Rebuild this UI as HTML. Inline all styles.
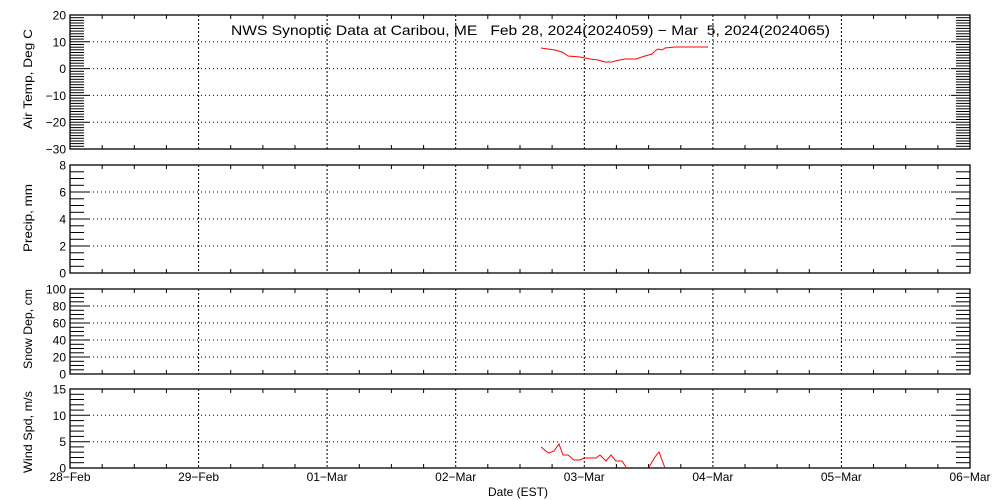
<!DOCTYPE html><html><head><style>body{margin:0;background:#fff}svg{display:block}text{font-family:"Liberation Sans",sans-serif;fill:#000}</style></head><body>
<svg id="s" width="1000" height="500" xmlns="http://www.w3.org/2000/svg"></svg>
<script>
const s=document.getElementById('s');let h='';
const L=70,R=970;
const X=[70,198.6,327.1,455.7,584.3,712.9,841.4,970];
const P=[
 {t:15,b:149,min:-30,max:20,maj:10,mn:1,lab:'Air Temp, Deg C',len:100,cy:79},
 {t:165,b:273,min:0,max:8,maj:2,mn:0.5,lab:'Precip, mm',len:68,cy:218},
 {t:289,b:374,min:0,max:100,maj:20,mn:5,lab:'Snow Dep, cm',len:80,cy:329},
 {t:389,b:468,min:0,max:15,maj:5,mn:1,lab:'Wind Spd, m/s',len:82,cy:432}];
P.forEach(p=>{
 const y=v=>p.b-(v-p.min)/(p.max-p.min)*(p.b-p.t);
 h+=`<rect x="${L}" y="${p.t}" width="${R-L}" height="${p.b-p.t}" fill="none" stroke="#000" stroke-width="1.3"/>`;
 for(let v=p.min+p.mn;v<p.max-1e-6;v+=p.mn){const yy=y(v).toFixed(1);const maj=Math.abs(v/p.maj-Math.round(v/p.maj))<1e-6;const len=maj?19:14;
  h+=`<line x1="${L}" x2="${L+len}" y1="${yy}" y2="${yy}" stroke="#000"/><line x1="${R}" x2="${R-len}" y1="${yy}" y2="${yy}" stroke="#000"/>`;
  if(maj)h+=`<line x1="${L+len}" x2="${R-len}" y1="${yy}" y2="${yy}" stroke="#000" stroke-dasharray="1,3"/>`;}
 for(let v=p.min;v<=p.max+1e-6;v+=p.maj){h+=`<text x="66" y="${(y(v)+4.5).toFixed(1)}" font-size="12" text-anchor="end">${v<0?'\u2212'+(-v):v}</text>`;}
 for(let i=1;i<7;i++)h+=`<line x1="${X[i]}" x2="${X[i]}" y1="${p.t}" y2="${p.b}" stroke="#000" stroke-dasharray="2,2"/>`;
 for(let i=0;i<7;i++)for(let k=1;k<4;k++){const xx=(X[i]+k*(X[i+1]-X[i])/4).toFixed(1);
  h+=`<line x1="${xx}" x2="${xx}" y1="${p.t}" y2="${p.t+4}" stroke="#000"/><line x1="${xx}" x2="${xx}" y1="${p.b}" y2="${p.b-4}" stroke="#000"/>`;}
 const cy=p.cy;h+=`<text x="32" y="${cy}" font-size="12" text-anchor="middle" textLength="${p.len}" lengthAdjust="spacingAndGlyphs" transform="rotate(-90 32 ${cy})">${p.lab}</text>`;
});
h+=`<polyline fill="none" stroke="#f00" points="541,48 548,49 555,50 562,52 568,56 580,57 590,59 598,60 605,62 612,62 615,61 625,59 636,59 645,56 652,54 655,51 658,49 662,50 665,48 675,47 708,47"/>`;
h+=`<polyline fill="none" stroke="#f00" points="541,447 547,452 549,453 554,451 559,444 563,455 568,455 574,460 580,460 584,458 596,458 600,455 606,461 611,455 616,461 622,461 626,467"/><polyline fill="none" stroke="#f00" points="649,467 655,457 659,452 665,468"/>`;
h+=`<text x="231" y="35" font-size="14" textLength="599" lengthAdjust="spacingAndGlyphs" xml:space="preserve">NWS Synoptic Data at Caribou, ME   Feb 28, 2024(2024059) \u2212 Mar  5, 2024(2024065)</text>`;
['28\u2212Feb','29\u2212Feb','01\u2212Mar','02\u2212Mar','03\u2212Mar','04\u2212Mar','05\u2212Mar','06\u2212Mar'].forEach((t,i)=>h+=`<text x="${X[i]}" y="481" font-size="12" text-anchor="middle">${t}</text>`);
h+=`<text x="518" y="496" font-size="12" text-anchor="middle">Date (EST)</text>`;
s.innerHTML=h;
</script></body></html>
